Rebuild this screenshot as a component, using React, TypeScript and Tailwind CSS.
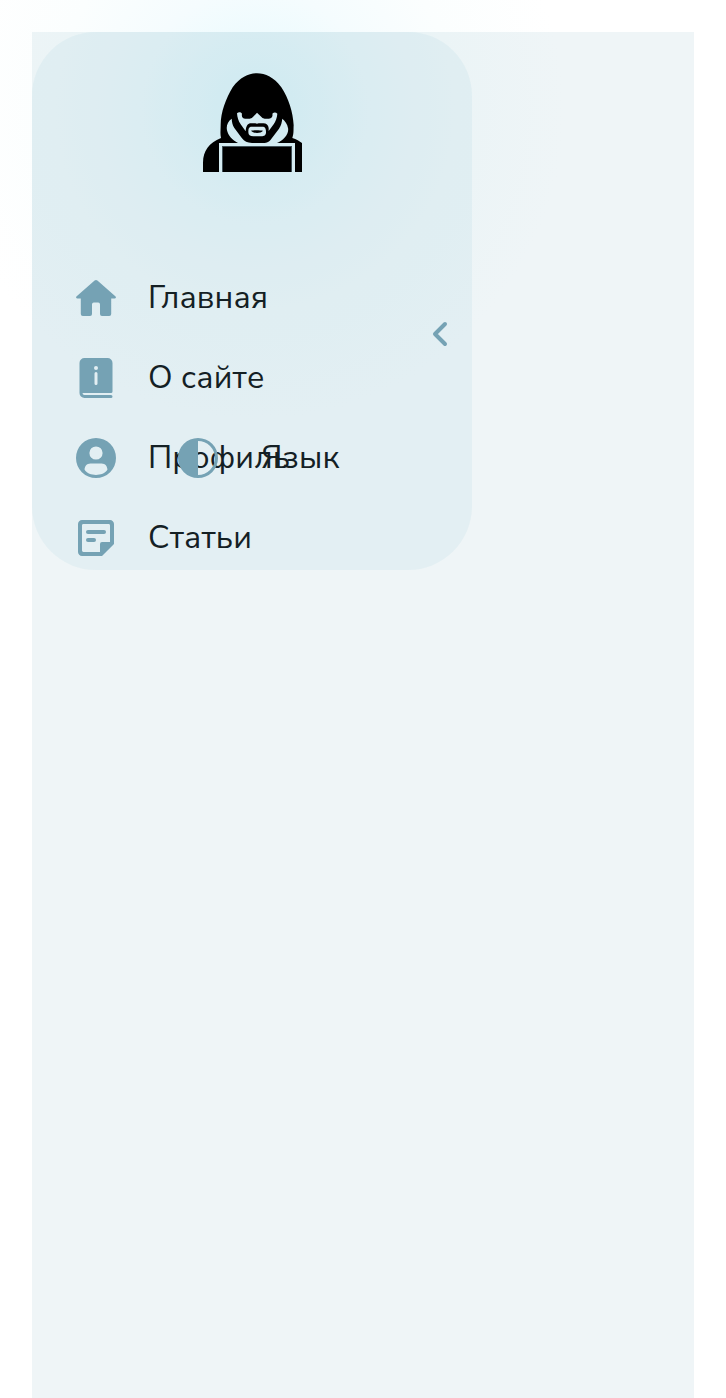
import React from "react";

const items = [
  { label: "Главная", icon: <HomeIcon /> },
  { label: "О сайте", icon: <BookIcon /> },
  { label: "Профиль", icon: <AccountIcon /> },
  { label: "Статьи", icon: <NoteIcon /> },
];

function Icon({ children }: { children: React.ReactNode }) {
  return <svg viewBox="0 0 24 24" className="size-12 shrink-0 fill-[#75a2b4]">{children}</svg>;
}

function HomeIcon() {
  return (
    <Icon>
      <path d="M11.300 3.300Q12 2.700 12.700 3.300L21.800 11.300Q22.300 12.200 21.300 12.200H19.600V20Q19.600 21 18.600 21H15Q14 21 14 20V15.200Q14 14.300 13.100 14.300H10.900Q10 14.300 10 15.200V20Q10 21 9 21H5.400Q4.400 21 4.400 20V12.200H2.700Q1.700 12.200 2.200 11.300z" />
    </Icon>
  );
}

function BookIcon() {
  return (
    <Icon>
      <path fillRule="evenodd" d="M6.25 2A2.5 2.5 0 0 0 3.75 4.5v15A2.5 2.5 0 0 0 6.25 22h13.25a.75.75 0 0 0 0-1.5H6.25a1 1 0 0 1-1-1h14.25a.75.75 0 0 0 .75-.75V4.500A2.5 2.5 0 0 0 17.75 2zM12 6a1 1 0 1 1 0 2 1 1 0 0 1 0-2zm0 3a.75.75 0 0 1 .75.75v5a.75.75 0 0 1-1.5 0v-5A.75.75 0 0 1 12 9z" />
    </Icon>
  );
}

function AccountIcon() {
  return (
    <Icon>
      <path fillRule="evenodd" d="M12 2a10 10 0 1 0 0 20 10 10 0 0 0 0-20zm0 4.200a3.300 3.300 0 1 1 0 6.600 3.300 3.300 0 0 1 0-6.600zM9.200 14.700h5.600c1.800 0 2.900 1.400 2.900 3.200C16.600 19.600 14.300 20.500 12 20.500S7.400 19.600 6.300 17.900c0-1.800 1.100-3.200 2.900-3.200z" />
    </Icon>
  );
}

function NoteIcon() {
  return (
    <Icon>
      <path fillRule="evenodd" d="M5 3C3.900 3 3 3.900 3 5v14c0 1.100.9 2 2 2h10l6-6V5c0-1.100-.9-2-2-2zM5.700 5H18.300Q19 5 19 5.700V14H15Q14 14 14 15V19H5.700Q5 19 5 18.300V5.700Q5 5 5.700 5z" />
      <rect x="7" y="8" width="10" height="2" rx="1" />
      <rect x="7" y="12" width="5" height="2" rx="1" />
    </Icon>
  );
}

function ContrastIcon() {
  return (
    <Icon>
      <path fillRule="evenodd" d="M12 2a10 10 0 1 0 0 20 10 10 0 0 0 0-20zm0 1.500a8.500 8.500 0 0 1 0 17z" />
    </Icon>
  );
}

function Logo() {
  return (
    <svg viewBox="0 0 360 360" className="size-[120px]">
      <path fillRule="evenodd" d="M33 330V302C33 266 51 243 87 228C84 214 86 204 86 190C86 150 102 110 122 76C145 45 170 34 195 34C220 34 246 46 268 76C290 110 303 150 305 190C304 205 306 212 301 228C313 231 323 238 330 243V330H309V243H255C274 235 292 216 288 198C286 186 280 178 271 170C269 181 268 190 261 200L236 233C229 242 222 243 211 243H180C166 243 157 238 150 229L127 198C121 189 120 180 119 170C108 178 102 190 105 205C108 220 121 235 138 243H81V330Z" />
      <path fill="#d3eaf1" d="M135 154C140 149 146 150 150 155C148 165 152 170 160 170H173Q180 170 185 163L195 152L206 163Q211 170 218 170H231C240 169 243 162 241 155C247 149 252 151 256 155C255 168 251 177 245 187L230 207V198C229 189 223 184 214 184H200L195 185L190 184H177C168 184 162 191 161 208L146 187C139 177 136 166 135 154Z" />
      <path fill="#d3eaf1" d="M176 194H214C220 195 222 201 222 211C222 220 216 223 208 223H184C174 223 169 219 169 210C169 200 170 196 176 194Z" />
      <path d="M177 206C185 204 203 204 213 206C206 215 184 215 177 206Z" />
      <path fill="#405057" d="M90 252H300V330H90Z" />
      <path d="M93 255H297V330H93Z" />
    </svg>
  );
}

export default function App() {
  return (
    <div className="h-[1398px] overflow-hidden bg-white bg-[radial-gradient(circle_at_255px_110px,#e3f9fd_0px,#f5fcfe_120px,#fbfefe_200px,#ffffff_310px)] px-8 pt-8 font-['Nunito_Sans','Nunito','Noto_Sans',sans-serif]">
      <div className="h-full bg-[#80aebf]/13">
        <aside className="relative h-[538px] w-[440px] rounded-[64px] bg-[#a0cee0]/15">
          <div className="flex justify-center pt-[30px]">
            <Logo />
          </div>
          <nav className="mt-[92px] flex flex-col gap-8 pl-10">
            {items.map((item) => (
              <a key={item.label} className="flex h-12 items-center gap-[28px] text-[32px] tracking-[0.15px] text-[#142024]">
                {item.icon}
                <span>{item.label}</span>
              </a>
            ))}
          </nav>
          <button className="absolute top-[402px] left-[142px] flex h-12 items-center gap-[39px] text-[32px] tracking-[0.3px] text-[#142024]">
            <ContrastIcon />
            <span>Язык</span>
          </button>
          <button aria-label="Свернуть" className="absolute top-[288px] left-[399px]">
            <svg viewBox="0 0 20 28" className="h-7 w-5 fill-none stroke-[#75a2b4] stroke-4">
              <path d="M14 4L4 14L14 24" strokeLinecap="round" strokeLinejoin="round" />
            </svg>
          </button>
        </aside>
      </div>
    </div>
  );
}
